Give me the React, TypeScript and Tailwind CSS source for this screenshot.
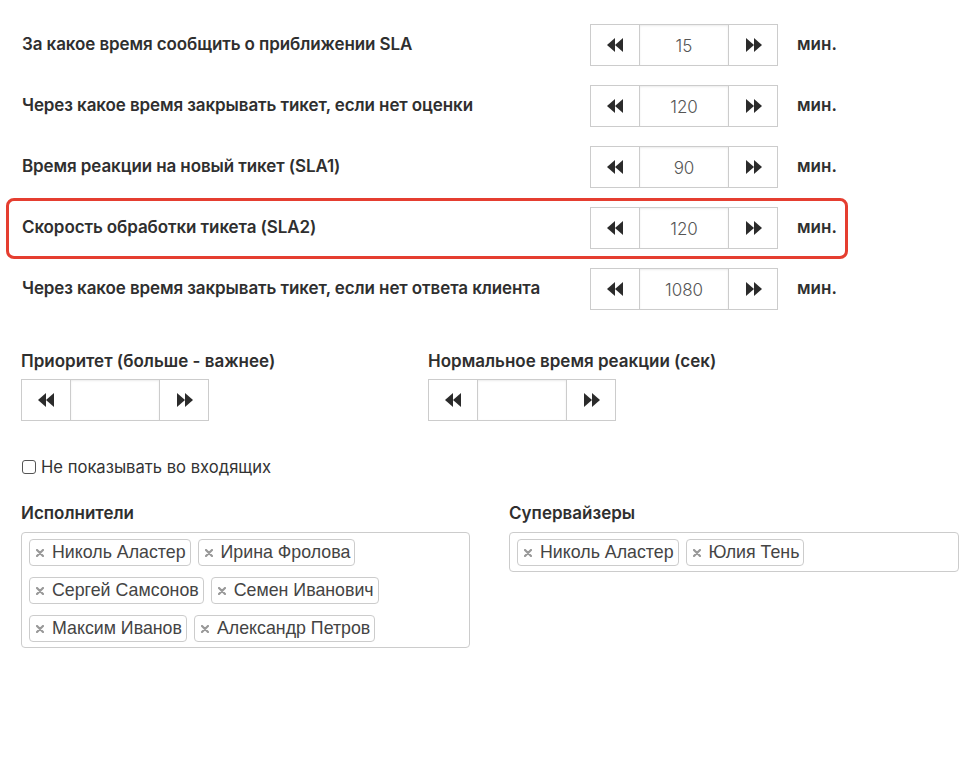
import React from 'react';

const timeRows = [
  { label: 'За какое время сообщить о приближении SLA', value: '15' },
  { label: 'Через какое время закрывать тикет, если нет оценки', value: '120' },
  { label: 'Время реакции на новый тикет (SLA1)', value: '90' },
  { label: 'Скорость обработки тикета (SLA2)', value: '120', active: true },
  { label: 'Через какое время закрывать тикет, если нет ответа клиента', value: '1080' },
];

const executors = [
  'Николь Аластер',
  'Ирина Фролова',
  'Сергей Самсонов',
  'Семен Иванович',
  'Максим Иванов',
  'Александр Петров',
];

const supervisors = ['Николь Аластер', 'Юлия Тень'];

const Back = () => (
  <svg width="17" height="14" viewBox="0 0 17 14" fill="#2b2b2b">
    <polygon points="0,7 8,0 8,14" />
    <polygon points="8,7 16,0 16,14" />
  </svg>
);

const Fwd = () => (
  <svg width="17" height="14" viewBox="0 0 17 14" fill="#2b2b2b">
    <polygon points="1,0 9,7 1,14" />
    <polygon points="9,0 17,7 9,14" />
  </svg>
);

const Spinner: React.FC<{ value?: string }> = ({ value }) => (
  <div className="flex h-[42px] w-[188px] border border-[#cccccc]">
    <div className="flex w-[48px] items-center justify-center">
      <Back />
    </div>
    <div className="flex w-[90px] items-center justify-center border-x border-[#cccccc] pt-[3px] text-[17px] font-light text-[#555] shadow-[inset_0_1px_2px_rgba(0,0,0,0.08)]">
      {value}
    </div>
    <div className="flex flex-1 items-center justify-center">
      <Fwd />
    </div>
  </div>
);

// select2-style chip
const Tag: React.FC<{ name: string }> = ({ name }) => (
  <div className="flex h-[27px] items-center rounded-[4px] border border-[#cccccc] bg-white pl-[6px] pr-[4px] font-['Liberation_Sans',sans-serif] text-[17.8px] text-[#444]">
    <svg width="8" height="8" viewBox="0 0 8 8" className="mr-[8px] mt-[1px]">
      <path d="M1 1L7 7M7 1L1 7" stroke="#999" strokeWidth="2.2" strokeLinecap="round" />
    </svg>
    {name}
  </div>
);

const App: React.FC = () => {
  return (
    <div className="min-h-[759px] w-[962px] bg-white font-['Inter',sans-serif] text-[#2f2f2f]">
      <div className="w-[848px] pl-[6px] pt-[15px]">
        {timeRows.map((row, i) => (
          <div
            key={i}
            className={
              row.active
                ? 'flex items-center rounded-[8px] border-[3px] border-[#e53e30] pb-[7px] pl-[13px] pt-[6px]'
                : 'flex items-center rounded-[8px] border-[3px] border-transparent pb-[7px] pl-[13px] pt-[6px]'
            }
          >
            <div className="w-[568px] text-[17px] font-semibold tracking-[-0.1px]">{row.label}</div>
            <Spinner value={row.value} />
            <div className="ml-[19px] text-[17px] font-semibold">мин.</div>
          </div>
        ))}
      </div>

      <div className="mt-[29px] flex pl-[21px]">
        <div className="w-[407px]">
          <div className="h-[24px] text-[17px] font-semibold leading-[24px]">Приоритет (больше - важнее)</div>
          <div className="mt-[6px] w-[188px]">
            <Spinner />
          </div>
        </div>
        <div>
          <div className="h-[24px] text-[17px] font-semibold leading-[24px]">Нормальное время реакции (сек)</div>
          <div className="mt-[6px]">
            <Spinner />
          </div>
        </div>
      </div>

      <label className="mt-[34px] flex h-[24px] items-center pl-[22px] text-[16.6px] leading-[24px] text-[#333]">
        <span className="mr-[5px] inline-block h-[14px] w-[14px] rounded-[3px] border border-[#555] bg-white" />
        Не показывать во входящих
      </label>

      <div className="mt-[22px] flex pl-[21px]">
        <div className="w-[449px]">
          <div className="h-[24px] text-[17px] font-semibold leading-[24px]">Исполнители</div>
          <div className="mt-[7px] flex flex-wrap gap-x-[7px] gap-y-[11px] rounded-[4px] border border-[#cccccc] px-[7px] pb-[5px] pt-[6px]">
            {executors.map((n) => (
              <Tag key={n} name={n} />
            ))}
          </div>
        </div>
        <div className="ml-[39px] w-[450px]">
          <div className="h-[24px] text-[17px] font-semibold leading-[24px]">Супервайзеры</div>
          <div className="mt-[7px] flex flex-wrap gap-x-[7px] gap-y-[11px] rounded-[4px] border border-[#cccccc] px-[7px] pb-[5px] pt-[6px]">
            {supervisors.map((n) => (
              <Tag key={n} name={n} />
            ))}
          </div>
        </div>
      </div>
    </div>
  );
};

export default App;
